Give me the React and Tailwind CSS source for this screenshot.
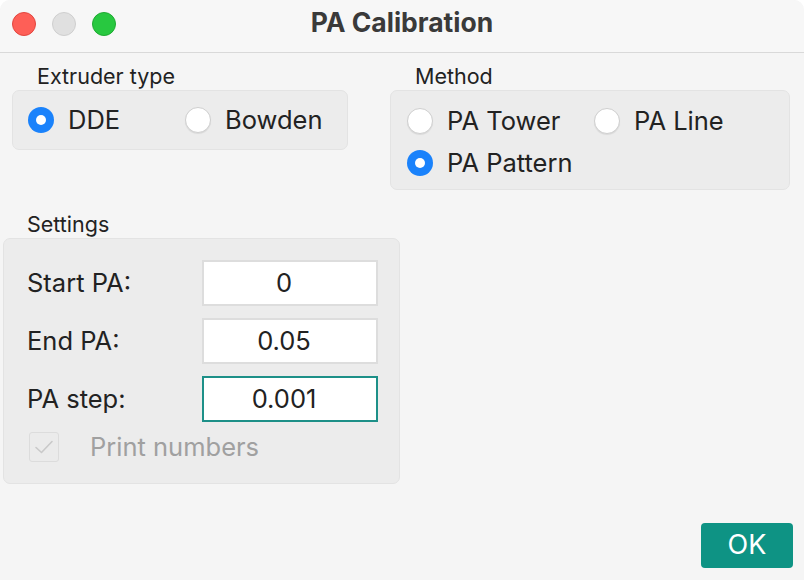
const FONT = { fontFamily: 'Inter, "Noto Sans", sans-serif' }

function Radio({ checked, label, className = '' }) {
  return (
    <div className={`flex items-center gap-[14px] ${className}`}>
      {checked ? (
        <span className="w-[26px] h-[26px] rounded-full bg-[#1a82fb] flex items-center justify-center shrink-0">
          <span className="w-[10px] h-[10px] rounded-full bg-white" />
        </span>
      ) : (
        <span className="w-[26px] h-[26px] rounded-full bg-white border border-[#cfcfcf] shadow-[0_1px_1px_rgba(0,0,0,0.08)] shrink-0" />
      )}
      <span className="text-[25.5px] leading-[30px] text-[#222]">{label}</span>
    </div>
  )
}

function Field({ label, value, focused }) {
  return (
    <div className="flex items-center h-[46px]">
      <span className="w-[175px] text-[25.5px] text-[#222]">{label}</span>
      <div
        className={`w-[176px] h-[46px] bg-white flex items-center justify-center pr-[12px] text-[25.5px] text-[#222] border-2 ${
          focused ? 'border-[#1d9088]' : 'border-[#dddddd]'
        }`}
      >
        {value}
      </div>
    </div>
  )
}

export default function App() {
  return (
    <div className="w-[804px] h-[580px] bg-[#f5f5f5] flex flex-col overflow-hidden rounded-t-[10px]" style={FONT}>
      {/* Title bar */}
      <div className="h-[53px] shrink-0 border-b border-[#d9d9d9] bg-[#f7f7f7] flex items-center relative">
        <div className="flex items-center gap-[16px] pl-[12px] pb-[4px]">
          <span className="w-[24px] h-[24px] rounded-full bg-[#fe5f57] border border-[#e2463f]" />
          <span className="w-[24px] h-[24px] rounded-full bg-[#e0e0e0] border border-[#cfcfcf]" />
          <span className="w-[24px] h-[24px] rounded-full bg-[#28c840] border border-[#1faa32]" />
        </div>
        <div className="absolute inset-x-0 top-[4px] text-center text-[26.5px] leading-[36px] font-bold text-[#3a3a3a]">
          PA Calibration
        </div>
      </div>

      {/* Top groups */}
      <div className="flex pt-[10px] items-start">
        <div className="ml-[12px] w-[336px]">
          <div className="pl-[25px] text-[21.5px] leading-[26px] text-[#222] mb-[1px]">Extruder type</div>
          <div className="h-[60px] bg-[#ececec] border border-[#e3e3e3] rounded-[7px] flex items-center pl-[15px]">
            <Radio checked label="DDE" className="w-[157px]" />
            <Radio label="Bowden" />
          </div>
        </div>
        <div className="ml-[42px] w-[400px]">
          <div className="pl-[25px] text-[21.5px] leading-[26px] text-[#222] mb-[1px]">Method</div>
          <div className="h-[100px] bg-[#ececec] border border-[#e3e3e3] rounded-[7px] flex flex-col gap-[12px] pt-[15px] pl-[16px]">
            <div className="flex">
              <Radio label="PA Tower" className="w-[187px]" />
              <Radio label="PA Line" />
            </div>
            <Radio checked label="PA Pattern" />
          </div>
        </div>
      </div>

      {/* Settings */}
      <div className="ml-[3px] w-[397px] mt-[21px]">
        <div className="pl-[24px] text-[21.5px] leading-[26px] text-[#222] mb-[1px]">Settings</div>
        <div className="h-[246px] bg-[#ececec] border border-[#e3e3e3] rounded-[7px] pt-[21px] pl-[23px] flex flex-col gap-[12px]">
          <Field label="Start PA:" value="0" />
          <Field label="End PA:" value="0.05" />
          <Field label="PA step:" value="0.001" focused />
          <div className="flex items-center h-[30px] mt-[-2px]">
            <span className="w-[30px] h-[30px] ml-[2px] border border-[#dcdcdc] rounded-[3px] bg-[#ebebeb] flex items-center justify-center">
              <svg width="22" height="22" viewBox="0 0 22 22" fill="none">
                <path d="M3 11.5l5.5 5L19 5.5" stroke="#c9c9c9" strokeWidth="1.6" strokeLinecap="round" strokeLinejoin="round" />
              </svg>
            </span>
            <span className="ml-[31px] text-[25.5px] leading-[30px] text-[#a0a0a0]">Print numbers</span>
          </div>
        </div>
      </div>

      <div className="flex-1" />
      <div className="flex justify-end pr-[11px] pb-[12px]">
        <button className="w-[92px] h-[45px] rounded-[4px] bg-[#0e9384] text-white text-[27px] flex items-center justify-center">
          OK
        </button>
      </div>
    </div>
  )
}
